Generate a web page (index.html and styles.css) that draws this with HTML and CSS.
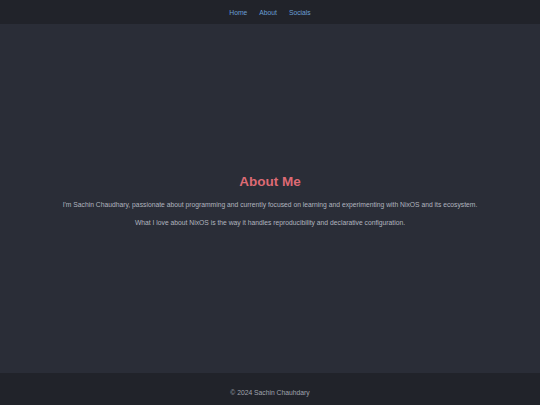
FILE: index.html
```html
<!DOCTYPE html>
<html>
<head>
<meta charset="utf-8">
<link rel="stylesheet" href="styles.css">
</head>
<body>
<header class="header">
  <nav class="nav">
    <a href="#" class="nav-link">Home</a>
    <a href="#" class="nav-link">About</a>
    <a href="#" class="nav-link">Socials</a>
  </nav>
</header>
<main class="main">
  <section class="about">
    <h1 class="title">About Me</h1>
    <p class="text">I'm Sachin Chaudhary, passionate about programming and currently focused on learning and experimenting with NixOS and its ecosystem.</p>
    <p class="text">What I love about NixOS is the way it handles reproducibility and declarative configuration.</p>
  </section>
</main>
<footer class="footer">
  <p class="copy">© 2024 Sachin Chauhdary</p>
</footer>
</body>
</html>
```
FILE: styles.css
```css
html, body {
  margin: 0;
  padding: 0;
  height: 100%;
}
body {
  font-family: "Liberation Sans", Arial, sans-serif;
  background: #2a2d37;
  color: #b0b4bf;
  display: flex;
  flex-direction: column;
  min-height: 405px;
}
.header {
  background: #21232a;
  height: 24px;
  display: flex;
  align-items: center;
  justify-content: center;
}
.nav {
  display: flex;
  gap: 12px;
}
.nav-link {
  color: #6a9fd4;
  text-decoration: none;
  font-size: 6.75px;
}
.main {
  flex: 1;
  display: flex;
  align-items: center;
  justify-content: center;
  text-align: center;
}
.about {
  padding-top: 14px;
}
.title {
  color: #dd6a74;
  font-size: 13.5px;
  margin: 0 0 12px;
}
.text {
  font-size: 6.75px;
  line-height: 8px;
  margin: 0 0 10px;
}
.footer {
  background: #21232a;
  height: 32px;
  box-sizing: border-box;
  padding-top: 6px;
  display: flex;
  align-items: center;
  justify-content: center;
}
.copy {
  margin: 0;
  font-size: 6.75px;
  color: #a0a4ae;
}
```
